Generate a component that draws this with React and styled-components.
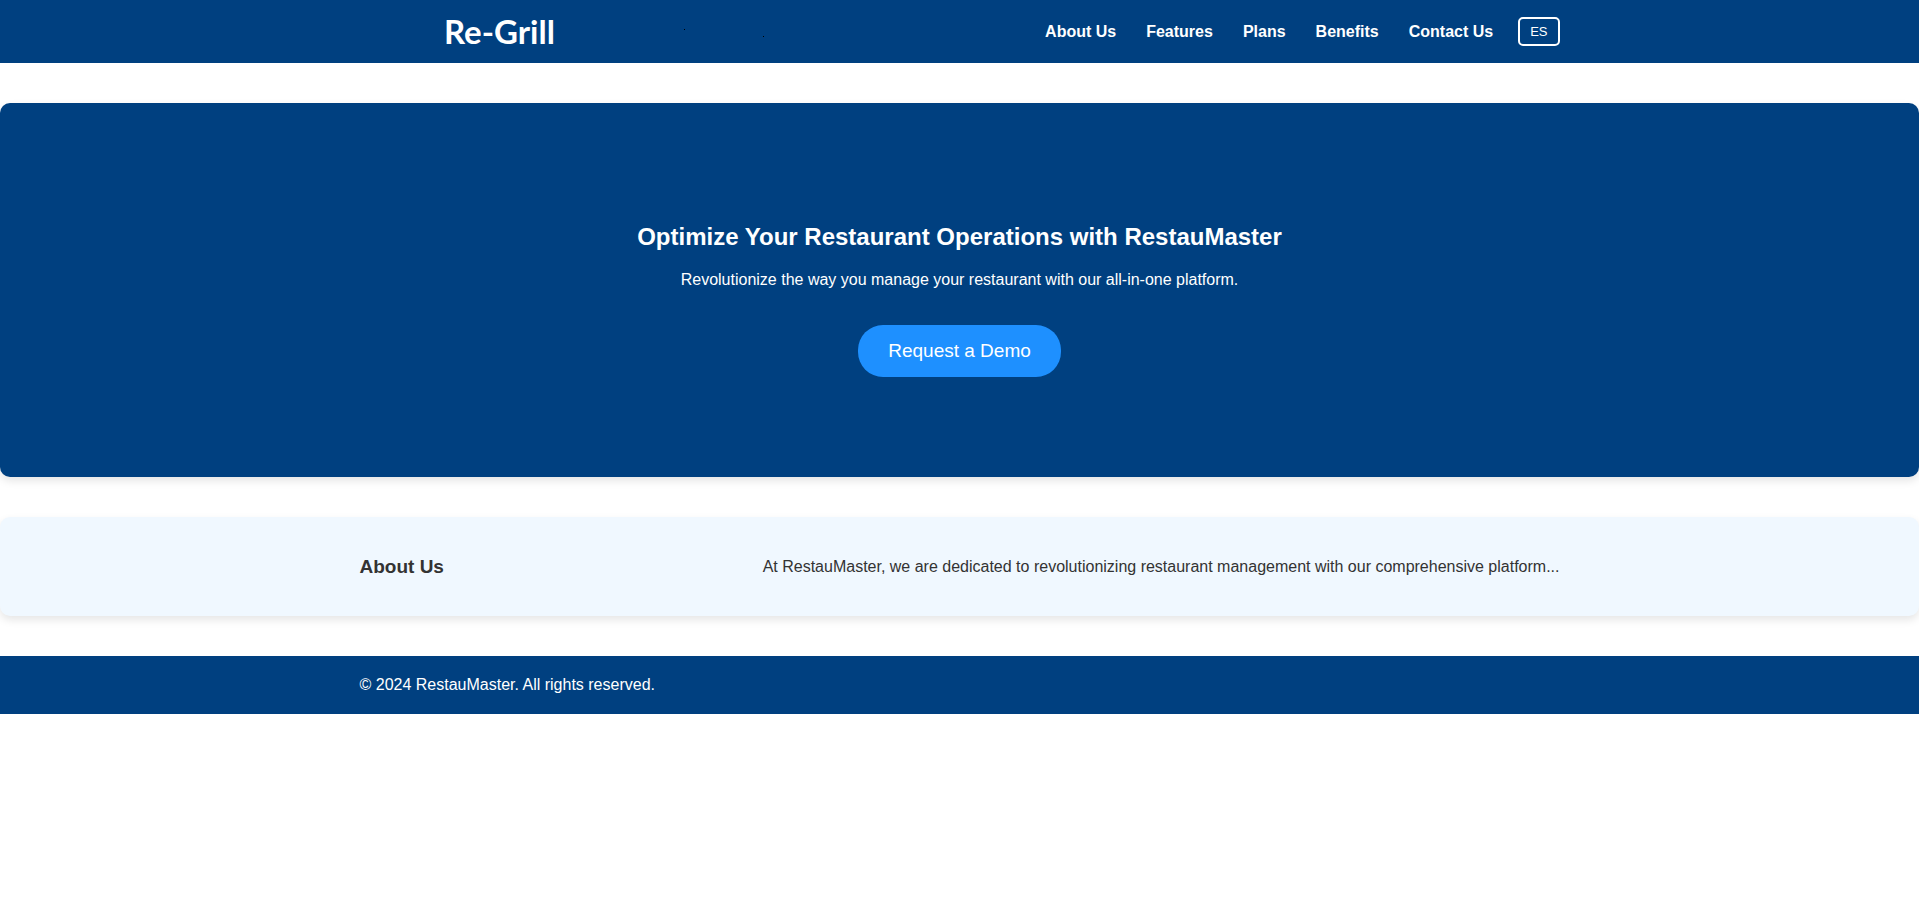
import React from "react";
import styled, { createGlobalStyle } from "styled-components";

const GlobalStyle = createGlobalStyle`
  *, *::before, *::after {
    box-sizing: border-box;
  }
  body {
    margin: 0;
    background: #ffffff;
    color: #333333;
    font-family: Arial, "Liberation Sans", sans-serif;
    font-size: 16px;
    line-height: 18px;
  }
`;

const Container = styled.div`
  display: flex;
  align-items: center;
  justify-content: space-between;
  gap: 20px;
  width: 100%;
  max-width: 1200px;
  margin: 0 auto;
`;

const Header = styled.header`
  padding: 16px 0;
  background: #004080;
`;

const LogoLink = styled.a`
  display: block;
  line-height: 0;
`;

const Logo = styled.svg`
  width: 420px;
  height: 31px;
  overflow: visible;
`;

const LogoText = styled.text`
  fill: #ffffff;
  font-family: Lato, "Liberation Sans", sans-serif;
  font-size: 33px;
  font-weight: 700;
`;

const Nav = styled.nav`
  display: flex;
  align-items: center;
  gap: 25px;
`;

const NavList = styled.ul`
  display: flex;
  gap: 30px;
  margin: 0;
  padding: 0;
  list-style: none;
`;

const NavLink = styled.a`
  color: #ffffff;
  font-weight: 700;
  text-decoration: none;
`;

const LanguageButton = styled.button`
  padding: 5px 10px;
  border: 2px solid #ffffff;
  border-radius: 5px;
  background: transparent;
  color: #ffffff;
  font-family: inherit;
  font-size: 13px;
  line-height: 15px;
  cursor: pointer;
`;

const Hero = styled.section`
  display: flex;
  flex-direction: column;
  align-items: center;
  margin: 40px 0;
  padding: 120px 20px 100px;
  border-radius: 10px;
  background: #004080;
  color: #ffffff;
  text-align: center;
  box-shadow: 0 4px 8px rgba(0, 0, 0, 0.1);
`;

const HeroTitle = styled.h2`
  margin: 0 0 20px;
  font-size: 24px;
  line-height: 28px;
`;

const HeroText = styled.p`
  margin: 0 0 36px;
`;

const DemoButton = styled.button`
  padding: 15px 30px;
  border: none;
  border-radius: 25px;
  background: #1e90ff;
  color: #ffffff;
  font-family: inherit;
  font-size: 19px;
  line-height: 22px;
  cursor: pointer;
`;

const About = styled.section`
  margin: 40px 0;
  padding: 39px 0;
  border-radius: 10px;
  background: #f0f8ff;
  box-shadow: 0 4px 8px rgba(0, 0, 0, 0.1);
`;

const AboutTitle = styled.h3`
  margin: 0;
  font-size: 19px;
  line-height: 21px;
`;

const Text = styled.p`
  margin: 0;
`;

const Footer = styled.footer`
  padding: 20px 0;
  background: #004080;
  color: #ffffff;
`;

const links = [
  ["About Us", "#about"],
  ["Features", "#features"],
  ["Plans", "#plans"],
  ["Benefits", "#benefits"],
  ["Contact Us", "#contact"],
];

export default function App() {
  return (
    <>
      <GlobalStyle />
      <Header id="top">
        <Container>
          <LogoLink href="#top">
            <Logo viewBox="0 0 420 31">
              <LogoText x="84" y="28">Re-Grill</LogoText>
              <rect x="324" y="13" width="1" height="1" fill="#000000" />
              <rect x="403" y="20" width="1" height="1" fill="#000000" />
            </Logo>
          </LogoLink>
          <Nav>
            <NavList>
              {links.map(([label, href]) => (
                <li key={href}>
                  <NavLink href={href}>{label}</NavLink>
                </li>
              ))}
            </NavList>
            <LanguageButton type="button">ES</LanguageButton>
          </Nav>
        </Container>
      </Header>
      <main>
        <Hero>
          <HeroTitle>Optimize Your Restaurant Operations with RestauMaster</HeroTitle>
          <HeroText>
            Revolutionize the way you manage your restaurant with our all-in-one platform.
          </HeroText>
          <DemoButton type="button">Request a Demo</DemoButton>
        </Hero>
        <About id="about">
          <Container>
            <AboutTitle>About Us</AboutTitle>
            <Text>
              At RestauMaster, we are dedicated to revolutionizing restaurant management with our
              comprehensive platform...
            </Text>
          </Container>
        </About>
      </main>
      <Footer>
        <Container>
          <Text>© 2024 RestauMaster. All rights reserved.</Text>
        </Container>
      </Footer>
    </>
  );
}
